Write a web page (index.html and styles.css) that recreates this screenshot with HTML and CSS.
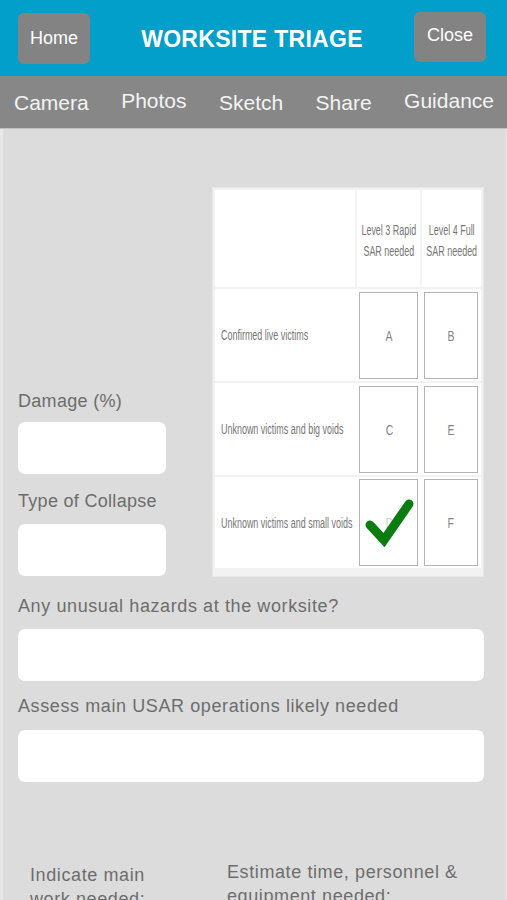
FILE: index.html
```html
<!DOCTYPE html>
<html lang="en">
<head>
<meta charset="utf-8">
<title>Worksite Triage</title>
<link rel="stylesheet" href="styles.css">
</head>
<body>
<div class="app">
  <header class="topbar">
    <button class="tbtn tbtn-home">Home</button>
    <h1 class="title">WORKSITE TRIAGE</h1>
    <button class="tbtn tbtn-close">Close</button>
  </header>
  <nav class="tabs">
    <span class="tab">Camera</span>
    <span class="tab tab-up">Photos</span>
    <span class="tab">Sketch</span>
    <span class="tab">Share</span>
    <span class="tab tab-up">Guidance</span>
  </nav>
  <main class="content">
    <section class="top">
      <div class="leftcol">
        <label class="lbl">Damage (%)</label>
        <div class="field field-small"></div>
        <label class="lbl lbl-2">Type of Collapse</label>
        <div class="field field-small"></div>
      </div>
      <div class="matrix">
        <div class="m-row m-head">
          <div class="m-label"></div>
          <div class="m-colhead"><span>Level 3 Rapid<br>SAR needed</span></div>
          <div class="m-colhead m-colhead-b"><span>Level 4 Full<br>SAR needed</span></div>
        </div>
        <div class="m-row">
          <div class="m-label"><span>Confirmed live victims</span></div>
          <div class="m-cell"><div class="box"><span>A</span></div></div>
          <div class="m-cell"><div class="box"><span>B</span></div></div>
        </div>
        <div class="m-row">
          <div class="m-label"><span>Unknown victims and big voids</span></div>
          <div class="m-cell"><div class="box"><span>C</span></div></div>
          <div class="m-cell"><div class="box"><span>E</span></div></div>
        </div>
        <div class="m-row m-last">
          <div class="m-label"><span>Unknown victims and small voids</span></div>
          <div class="m-cell">
            <div class="box box-checked"><span>D</span>
              <svg class="check" viewBox="0 0 60 60" width="60" height="60"><polyline points="10,36 24,51 49,15" fill="none" stroke="#0b7d10" stroke-width="9" stroke-linecap="round" stroke-linejoin="miter"/></svg>
            </div>
          </div>
          <div class="m-cell"><div class="box"><span>F</span></div></div>
        </div>
      </div>
    </section>
    <label class="lbl lbl-wide">Any unusual hazards at the worksite?</label>
    <div class="field"></div>
    <label class="lbl lbl-wide2">Assess main USAR operations likely needed</label>
    <div class="field"></div>
    <section class="bottom">
      <div class="bcol bcol-left">Indicate main work needed:</div>
      <div class="bcol bcol-right">Estimate time, personnel &amp; equipment needed:</div>
    </section>
  </main>
</div>
</body>
</html>
```

FILE: styles.css
```css
* { box-sizing: border-box; }
html, body { margin: 0; padding: 0; }
body {
  width: 507px;
  height: 900px;
  overflow: hidden;
  background: #dcdcdc;
  font-family: "Liberation Sans", Arial, sans-serif;
}
.app { display: flex; flex-direction: column; height: 900px; }

.topbar {
  height: 76px;
  background: #019fca;
  display: flex;
  align-items: flex-start;
  justify-content: space-between;
  padding: 0 21px 0 18px;
  flex: none;
}
.tbtn {
  width: 72px;
  height: 51px;
  margin-top: 13px;
  border: none;
  border-radius: 6px;
  background: #838383;
  color: #fff;
  font-family: "Liberation Sans", Arial, sans-serif;
  font-size: 18px;
  padding: 0;
}
.tbtn-close { margin-top: 12px; height: 50px; padding-bottom: 3px; }
.title {
  margin: 0;
  padding-top: 26px;
  color: #fff;
  font-size: 23px;
  font-weight: bold;
  line-height: 26px;
  letter-spacing: 0.3px;
}

.tabs {
  height: 53px;
  background: #878787;
  border-bottom: 1px solid #c2c2c2;
  display: flex;
  align-items: center;
  justify-content: space-between;
  padding: 2px 13px 0 14px;
  flex: none;
}
.tab {
  color: #f4f4f4;
  font-size: 21px;
}
.tab-up { position: relative; top: -2px; }

.content {
  flex: 1;
  border-left: 3px solid #e7e7e7;
  border-right: 2px solid #e2e2e2;
  padding: 0 21px 0 15px;
}

.top {
  display: flex;
  justify-content: space-between;
  align-items: flex-end;
  padding-top: 58px;
}
.leftcol { width: 148px; display: flex; flex-direction: column; padding-bottom: 1px; }

.lbl {
  display: block;
  color: #6d6d6d;
  font-size: 18px;
  line-height: 22px;
  letter-spacing: 0.3px;
  margin-bottom: 10px;
  white-space: nowrap;
}
.lbl-2 { margin-top: 16px; margin-bottom: 12px; }
.lbl-wide { margin-top: 18px; margin-bottom: 12px; letter-spacing: 0.6px; }
.lbl-wide2 { margin-top: 14px; margin-bottom: 13px; letter-spacing: 0.6px; }

.field {
  height: 52px;
  background: #ffffff;
  border-radius: 7px;
}
.field-small { height: 52px; }

/* matrix image */
.matrix {
  width: 272px;
  height: 390px;
  background: #f2f2f2;
  border: 1px solid #e6e6e6;
  padding: 2px 2px 8px 2px;
  display: flex;
  flex-direction: column;
  gap: 2px;
}
.m-row {
  display: flex;
  height: 92px;
  background: #fff;
}
.m-head { height: 97px; }
.m-last { height: 91px; }
.m-label {
  width: 142px;
  display: flex;
  align-items: center;
  padding-left: 6px;
  color: #767676;
  font-size: 14px;
  white-space: nowrap;
}
.m-label span { display: inline-block; transform: scaleX(0.64); transform-origin: left center; }
.m-colhead {
  width: 65px;
  border-left: 2px solid #f4f4f4;
  display: flex;
  align-items: center;
  justify-content: center;
  text-align: center;
  padding-top: 4px;
  color: #767676;
  font-size: 14px;
  line-height: 21px;
  white-space: nowrap;
}
.m-colhead span { display: inline-block; transform: scaleX(0.64); transform-origin: center center; }
.m-colhead-b { width: 61px; }
.m-cell {
  width: 65px;
  display: flex;
  align-items: center;
  justify-content: center;
}
.m-cell + .m-cell { width: 61px; }
.box {
  position: relative;
  width: 59px;
  height: 87px;
  border: 1px solid #b4b4b4;
  display: flex;
  align-items: center;
  justify-content: center;
  color: #858585;
  font-size: 15px;
}
.box span { display: inline-block; transform: scaleX(0.7); }
.m-cell + .m-cell .box { width: 54px; }
.box-checked { color: #cfcfcf; }
.check {
  position: absolute;
  left: 0;
  top: 9px;
}

.bottom {
  display: flex;
  margin-top: 78px;
  color: #6d6d6d;
  font-size: 18px;
  line-height: 24px;
  letter-spacing: 0.6px;
}
.bcol-left { width: 140px; margin-left: 12px; padding-top: 3px; }
.bcol-right { width: 250px; margin-left: 57px; }
```
